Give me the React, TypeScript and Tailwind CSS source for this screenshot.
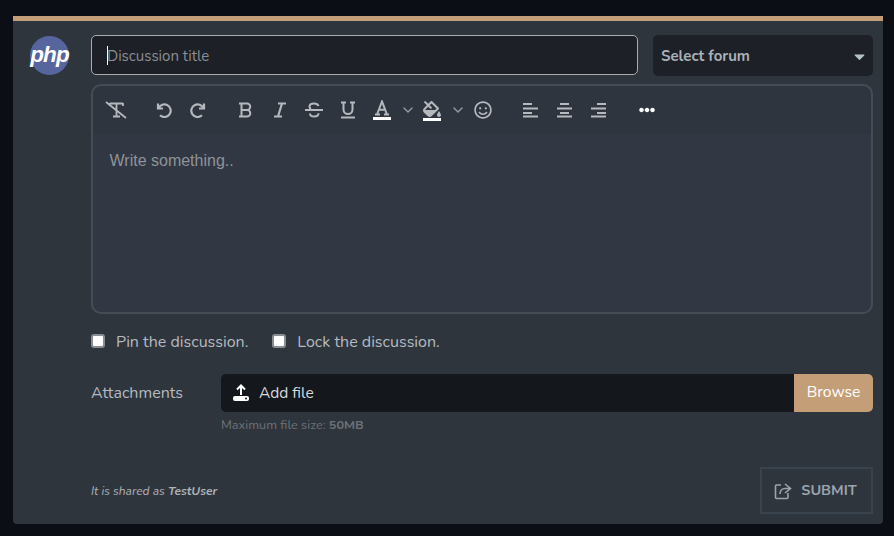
import type { ReactNode } from "react";
import { ChevronDown } from "lucide-react";
import { FaFillDrip, FaRegSmile, FaEllipsisH, FaCaretDown } from "react-icons/fa";

const font = "font-['Nunito','Noto_Sans','Open_Sans',sans-serif]";

function Tool({ children, className = "" }: { children: ReactNode; className?: string }) {
  return <span className={"flex h-[34px] w-[34px] shrink-0 items-center justify-center text-[#b5b9bd] " + className}>{children}</span>;
}

function Ico({ d, w = 16, h = 16, sw = 2, className = "" }: { d: string; w?: number; h?: number; sw?: number; className?: string }) {
  return (
    <svg width={w} height={h} viewBox={`0 0 ${w} ${h}`} fill="none" stroke="currentColor" strokeWidth={sw} className={className}>
      <path d={d} />
    </svg>
  );
}

function Align({ xs }: { xs: [number, number][] }) {
  return (
    <svg width="16" height="16" viewBox="0 0 16 16" fill="currentColor">
      {xs.map(([x, w], i) => (
        <rect key={i} x={x} y={[1, 5.5, 10, 13.5][i]} width={w} height="2" />
      ))}
    </svg>
  );
}

export default function App() {
  return (
    <div className={"h-[536px] w-[894px] overflow-hidden bg-[#0b0e14] pt-4 pl-[13px] pr-[11px] " + font}>
      <div className="flex h-[508px] w-[870px] flex-col rounded-b border-t-[5px] border-[#c49e76] bg-[#2f353d] pl-[17px] pr-[10px] pt-[14px]">
        <div className="flex gap-[22px]">
          <div className="mt-px flex h-[39px] w-[39px] shrink-0 items-center justify-center rounded-full bg-[#56659e]">
            <span className="font-['Liberation_Sans',sans-serif] text-[22.5px] font-bold italic leading-none tracking-[-0.9px] text-white">php</span>
          </div>
          <div className="flex min-w-0 flex-1 flex-col">
            <div className="flex gap-[15px]">
              <div className="relative flex-1">
                <input
                  placeholder="Discussion title"
                  className="h-10 w-full rounded-[5px] border border-[#a9abad] bg-[#1d2027] px-[15px] pt-[2px] text-[15px] text-white placeholder:text-[#8b8e92] outline-none"
                />
                <span className="absolute left-[16px] top-[11px] h-[19px] w-px bg-white" />
              </div>
              <div className="flex h-[41px] w-[220px] items-center justify-between rounded-[5px] bg-[#1d2027] pl-[8px] pr-[5px] pt-[2px]">
                <span className="text-[15px] font-bold text-[#a9b1b9]">Select forum</span>
                <FaCaretDown className="text-[#b5c0c9]" size={17} />
              </div>
            </div>
            <div className="mt-[8px] h-[230px] rounded-[10px] border-2 border-[#464c56] bg-[#313843]">
              <div className="flex h-[48px] items-center rounded-t-[10px] bg-[#2f353f] pl-[6px]">
                <Tool><Ico w={22} h={18} d="M5 2.5H18M5 2V5M18 2V5M11.5 2.5V15M8 15.5H15M1 1L21 17" sw={1.8} /></Tool>
                <Tool className="ml-[14px]"><Ico d="M2 1.5V6.5H7M2.5 6.5A6.3 6.3 0 1 1 4 13.2" sw={2.2} /></Tool>
                <Tool><Ico d="M2 1.5V6.5H7M2.5 6.5A6.3 6.3 0 1 1 4 13.2" sw={2.2} className="-scale-x-100" /></Tool>
                <Tool className="ml-[14px]"><Ico d="M1 1.5H9a3.2 3.2 0 0 1 0 6.4H3.5M9 7.9a3.3 3.3 0 0 1 0 6.6H1M3.5 1.5V14.5" /></Tool>
                <Tool><Ico d="M6 1.5H14M2 14.5H10M10 1.5L6 14.5" sw={2.2} /></Tool>
                <Tool><Ico w={18} d="M13.5 4C13 2.5 11 1.5 9 1.5C6.5 1.5 4.5 2.8 4.5 4.7C4.5 5.6 5 6.5 6 7M0 8H18M5 11.5C5 13.5 7 14.5 9.2 14.5C11.7 14.5 13.5 13.3 13.5 11.3" /></Tool>
                <Tool><Ico h={18} d="M1 1.5H6M10 1.5H15M3.5 1.5V8.5a4.5 4.5 0 0 0 9 0V1.5M1 16.5H15" /></Tool>
                <Tool>
                  <span className="flex w-[18px] flex-col items-center">
                    <Ico d="M1 14.5H6M10 14.5H15M3 14.5L8 1.5L13 14.5M5 9.7H11" />
                    <span className="mt-[1px] h-[3px] w-[18px] bg-white" />
                  </span>
                </Tool>
                <ChevronDown size={16} className="ml-[0.5px] shrink-0 text-[#9a9ea2]" />
                <span className="ml-[7.5px] flex w-[18px] shrink-0 flex-col items-center text-[#b5b9bd]">
                  <FaFillDrip size={18} />
                  <span className="h-[3px] w-[18px] bg-white" />
                </span>
                <ChevronDown size={16} className="ml-[9px] shrink-0 text-[#9a9ea2]" />
                <Tool><FaRegSmile size={18} /></Tool>
                <Tool className="ml-[14px]"><Align xs={[[0, 9], [0, 15], [0, 9], [0, 15]]} /></Tool>
                <Tool><Align xs={[[3, 9], [0, 15], [3, 9], [0, 15]]} /></Tool>
                <Tool><Align xs={[[6, 9], [0, 15], [6, 9], [0, 15]]} /></Tool>
                <Tool className="ml-[14px]"><FaEllipsisH size={16} className="text-white" /></Tool>
              </div>
              <div className="pl-[16.5px] pt-[17px] font-['Liberation_Sans',sans-serif] text-[16px] leading-5 text-[#8f9398]">Write something..</div>
            </div>
            <div className="mt-[17px] flex h-5 items-center text-[16px] text-[#b5bac0]">
              <span className="h-[14px] w-[14px] rounded-[3px] border-2 border-[#8a8d92] bg-white" />
              <span className="ml-[11px] pt-[2px]">Pin the discussion.</span>
              <span className="ml-[24px] h-[14px] w-[14px] rounded-[3px] border-2 border-[#8a8d92] bg-white" />
              <span className="ml-[11px] pt-[2px]">Lock the discussion.</span>
            </div>
            <div className="mt-[23px] flex">
              <span className="flex h-[38px] w-[130px] items-center text-[16px] text-[#b5bac0]">Attachments</span>
              <div className="flex-1">
                <div className="flex h-[38px] items-center overflow-hidden rounded-[5px] bg-[#14181c]">
                  <svg width="18" height="18" viewBox="0 0 18 18" className="ml-[11px] shrink-0 text-white">
                    <path d="M9 2V11M5 5.5L9 1.5L13 5.5" fill="none" stroke="currentColor" strokeWidth="2" />
                    <rect x="1" y="12" width="16" height="5" rx="2" fill="currentColor" />
                    <circle cx="14" cy="14.5" r="1" fill="#14181c" />
                  </svg>
                  <span className="ml-[9px] flex-1 text-[15.5px] text-[#d8dadc]">Add file</span>
                  <span className="flex h-full w-[79px] items-center justify-center bg-[#c49e76] text-[15.7px] text-white">Browse</span>
                </div>
                <div className="mt-[5px] h-4 text-[12.7px] leading-4 text-[#6c7178]">Maximum file size: <b className="font-bold">50MB</b></div>
              </div>
            </div>
            <div className="mt-[34px] flex items-center justify-between">
              <span className="text-[12px] italic text-[#aeb2b7]">It is shared as <b className="font-bold">TestUser</b></span>
              <span className="flex h-[47px] w-[113px] items-center justify-center gap-[9px] border-2 border-[#39434e] pr-[2px] text-[14.5px] font-bold text-[#9aa4ae]">
                <Ico w={18} h={18} d="M7 3H2.5A1 1 0 0 0 1.5 4V15.5A1 1 0 0 0 2.5 16.5H13A1 1 0 0 0 14 15.5V11M11 2L16.5 6.5L11 11M16 6.5H11C8 6.5 6 9 6 12" sw={1.6} />
                SUBMIT
              </span>
            </div>
          </div>
        </div>
      </div>
    </div>
  );
}
